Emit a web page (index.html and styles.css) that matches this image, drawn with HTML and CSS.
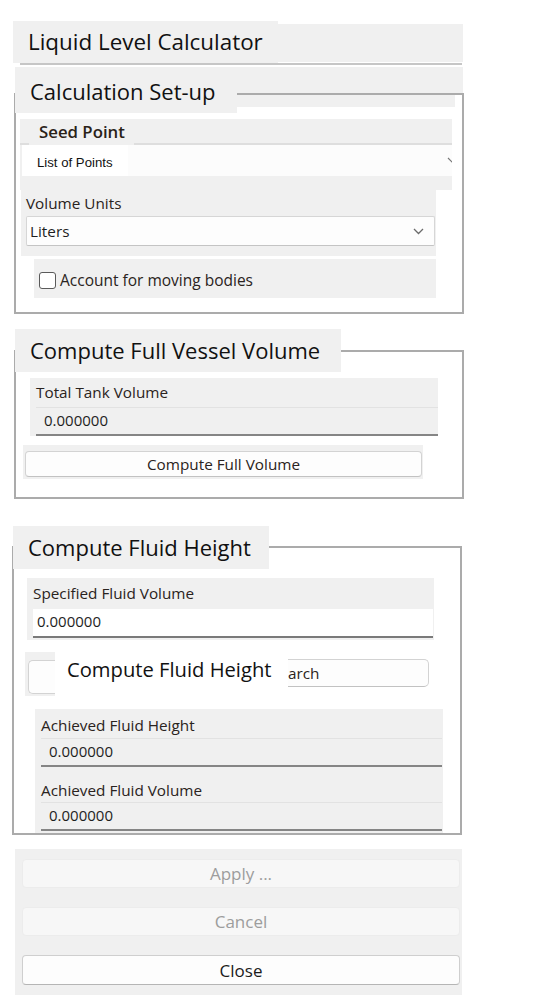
FILE: index.html
```html
<!DOCTYPE html>
<html lang="en">
<head>
<meta charset="utf-8">
<title>Liquid Level Calculator</title>
<link rel="stylesheet" href="styles.css">
</head>
<body>
<div class="page">
  <div class="titlebar">
    <div class="title-label">Liquid Level Calculator</div>
    <div class="title-fill"></div>
  </div>
  <div class="title-rule"></div>

  <section class="group setup">
    <div class="band"></div>
    <div class="legend legend-setup">Calculation Set-up</div>
    <div class="frame frame-setup">
      <div class="frame-top"></div>
      <div class="seed">
        <div class="seed-head"><span class="seed-label">Seed Point</span></div>
        <div class="seed-field">
          <span class="seed-value">List of Points</span>
          <svg class="chev chev-clip" width="10" height="6" viewBox="0 0 10 6"><path d="M1 1 L5 5 L9 1" fill="none" stroke="#777" stroke-width="1.2"/></svg>
        </div>
      </div>
      <div class="units">
        <div class="field-label">Volume Units</div>
        <div class="combo">
          <span>Liters</span>
          <svg class="chev" width="11" height="7" viewBox="0 0 11 7"><path d="M1 1 L5.5 5.5 L10 1" fill="none" stroke="#6b6b6b" stroke-width="1.3"/></svg>
        </div>
      </div>
      <div class="check-row">
        <span class="checkbox"></span>
        <span class="check-text">Account for moving bodies</span>
      </div>
    </div>
  </section>

  <section class="group vessel">
    <div class="legend legend-vessel">Compute Full Vessel Volume</div>
    <div class="frame frame-vessel">
      <div class="box box-total">
        <div class="field-label">Total Tank Volume</div>
        <div class="readout">0.000000</div>
      </div>
      <div class="btn-strip">
        <div class="btn">Compute Full Volume</div>
      </div>
    </div>
  </section>

  <section class="group fluid">
    <div class="legend legend-fluid">Compute Fluid Height</div>
    <div class="frame frame-fluid">
      <div class="box box-spec">
        <div class="field-label">Specified Fluid Volume</div>
        <div class="edit">0.000000</div>
      </div>
      <div class="search-row">
        <div class="btn-stub"></div>
        <div class="inline-label">Compute Fluid Height</div>
        <div class="btn btn-rest">arch</div>
      </div>
      <div class="box box-achieved">
        <div class="field-label lbl-first">Achieved Fluid Height</div>
        <div class="readout">0.000000</div>
        <div class="field-label lbl-second">Achieved Fluid Volume</div>
        <div class="readout">0.000000</div>
      </div>
    </div>
  </section>

  <div class="actions">
    <div class="action disabled">Apply ...</div>
    <div class="action disabled">Cancel</div>
    <div class="action primary">Close</div>
  </div>
</div>
</body>
</html>
```

FILE: styles.css
```css
* { box-sizing: border-box; }
html, body { margin: 0; padding: 0; background: #ffffff; }
body {
  font-family: "Open Sans", "Noto Sans", sans-serif;
  color: #1e1e1e;
  width: 537px;
  height: 1006px;
  overflow: hidden;
}
.page { padding-top: 21px; }

/* Title */
.titlebar { display: flex; margin-left: 13px; height: 42px; }
.title-label {
  width: 265px; height: 42px; background: #f0f0f0;
  font-size: 22.4px; line-height: 42px; padding-left: 15px; color: #111;
}
.title-fill { width: 185px; height: 38px; margin-top: 3px; background: #f0f0f0; }
.title-rule { margin-left: 20px; width: 442px; height: 2px; background: #c6c6c6; }

/* group sections */
.group { position: relative; }
.legend {
  position: absolute; z-index: 2; background: #f0f0f0; height: 43px;
  font-size: 22px; line-height: 43px; padding-left: 15px; color: #111; white-space: nowrap;
}
.frame { border: 2px solid #ababab; background: #fff; overflow: hidden; position: relative; z-index: 1; }
.field-label { font-size: 15.3px; line-height: 29px; padding-left: 6px; color: #2a2320; }

/* Setup */
.setup { margin-top: 2px; }
.band { margin-left: 15px; width: 448px; height: 26px; background: #f0f0f0; }
.legend-setup { left: 15px; top: 3px; width: 222px; }
.frame-setup { margin-left: 14px; width: 450px; height: 221px; }
.frame-top { width: 439px; height: 12px; background: #f0f0f0; margin-bottom: 12px; }
.seed { margin-left: 4px; width: 432px; height: 71px; background: #f0f0f0; }
.seed-head { height: 26px; border-bottom: 2px solid #dedede; padding-left: 9px; }
.seed-label {
  display: inline-block; height: 26px; padding: 0 9px 0 10px; background: #f0f0f0;
  font-size: 16.8px; font-weight: 600; line-height: 25px; color: #2a2218;
}
.seed-field {
  position: relative; height: 31px; background: #fcfcfc; margin-left: 2px;
  display: flex; align-items: center; overflow: hidden;
}
.seed-value {
  background: #fff; height: 31px; width: 106px; font-family: "Liberation Sans", Arial, sans-serif;
  font-size: 13.2px; line-height: 31px; padding-left: 15px; padding-top: 2px; color: #111;
}
.chev { position: absolute; right: 10px; top: 50%; margin-top: -3px; }
.chev-clip { right: -5px; margin-top: -4px; }
.units { margin-left: 5px; width: 415px; height: 66px; background: #f0f0f0; }
.units .field-label { line-height: 26px; padding-left: 5px; }
.combo {
  position: relative; margin-left: 5px; width: 409px; height: 30px;
  background: #fdfdfd; border: 1px solid #d6d6d6; border-bottom-color: #c4c4c4; border-radius: 2px;
  font-size: 15.3px; line-height: 28px; padding-left: 3px;
}
.check-row {
  margin-top: 3px; margin-left: 18px; width: 402px; height: 39px; background: #f0f0f0;
  display: flex; align-items: center; padding-left: 5px; padding-top: 3px;
}
.checkbox {
  width: 17px; height: 17px; border: 1.5px solid #5a5a5a; border-radius: 3px; background: #fff;
  margin-right: 4px;
}
.check-text { font-size: 15.5px; color: #2a2320; }

/* Vessel */
.vessel { margin-top: 36px; }
.legend-vessel { left: 15px; top: -21px; width: 326px; }
.frame-vessel { margin-left: 14px; width: 450px; height: 149px; padding-top: 26px; }
.box { background: #f0f0f0; }
.box-total { margin-left: 14px; width: 408px; height: 58px; }
.readout {
  margin-left: 6px; height: 29px; background: #f0f0f0; border-top: 1px solid #e2e2e2;
  border-bottom: 2px solid #858585; font-size: 15px; line-height: 24px; padding-left: 8px;
}
.btn-strip { margin-top: 9px; margin-left: 7px; width: 400px; height: 34px; background: #f0f0f0; padding: 6px 1px 0 2px; }
.btn {
  height: 26px; background: #fdfdfd; border: 1px solid #d3d3d3; border-bottom-color: #c2c2c2;
  border-radius: 4px; font-size: 15.3px; line-height: 24px; text-align: center; color: #2a2320;
}

/* Fluid */
.fluid { margin-top: 47px; }
.legend-fluid { left: 13px; top: -20px; width: 256px; }
.frame-fluid { margin-left: 12px; width: 450px; height: 289px; padding-top: 30px; }
.box-spec { margin-left: 13px; width: 407px; height: 62px; }
.box-spec .field-label { line-height: 31px; }
.edit {
  margin-left: 6px; width: 400px; height: 29px; background: #fff;
  border-bottom: 2px solid #7a7a7a; font-size: 15px; line-height: 25px; padding-left: 4px;
}
.search-row {
  margin-top: 12px; margin-left: 11px; width: 405px; height: 44px;
  display: flex; align-items: flex-start;
}
.btn-stub {
  width: 30px; height: 44px; background: #f0f0f0; padding: 8px 0 0 3px;
}
.btn-stub::after {
  content: ""; display: block; width: 27px; height: 32px; background: #fdfdfd;
  border: 1px solid #d3d3d3; border-right: none; border-radius: 5px 0 0 5px;
}
.inline-label {
  width: 233px; height: 44px; background: #fff; flex: none;
  font-size: 20.2px; line-height: 35px; padding-left: 12px; color: #111; white-space: nowrap;
}
.btn-rest {
  margin-top: 7px; width: 141px; height: 28px; line-height: 26px; text-align: left;
  border-left: none; border-radius: 0 5px 5px 0; padding-left: 0;
}
.box-achieved { margin-top: 13px; margin-left: 21px; width: 408px; height: 130px; }
.box-achieved .lbl-first { line-height: 26px; padding-top: 3px; }
.box-achieved .lbl-second { line-height: 24px; padding-top: 11px; }
.box-achieved .readout { width: 401px; line-height: 25px; }

/* Actions */
.actions {
  margin-top: 14px; margin-left: 15px; width: 447px; height: 146px; background: #f0f0f0;
  padding: 10px 0 0 7px; display: flex; flex-direction: column; gap: 19px;
}
.action {
  width: 438px; height: 29px; border-radius: 4px; font-size: 17px; line-height: 27px; text-align: center;
}
.action.disabled { background: #f7f7f7; border: 1px solid #ececec; color: #9d9d9d; }
.action.primary { background: #fdfdfd; border: 1px solid #cfcfcf; border-bottom-color: #b5b5b5; color: #1b1b1b; height: 30px; line-height: 29px; }
```
